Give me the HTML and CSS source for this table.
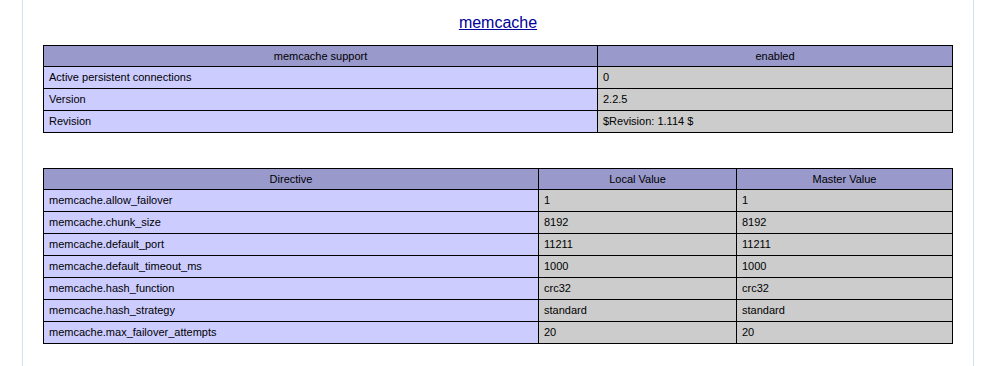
FILE: index.html
```html
<!DOCTYPE html>
<html>
<head>
<meta charset="utf-8">
<link rel="stylesheet" href="styles.css">
</head>
<body>
<div class="page">
  <h2 class="title"><a href="#module_memcache">memcache</a></h2>
  <table class="info t1">
    <colgroup><col class="c1"><col class="c2"></colgroup>
    <tr class="h"><th>memcache support</th><th>enabled</th></tr>
    <tr><td class="e">Active persistent connections </td><td class="v">0 </td></tr>
    <tr><td class="e">Version </td><td class="v">2.2.5 </td></tr>
    <tr><td class="e">Revision </td><td class="v">$Revision: 1.114 $ </td></tr>
  </table>
  <table class="info t2">
    <colgroup><col class="d1"><col class="d2"><col class="d3"></colgroup>
    <tr class="h"><th>Directive</th><th>Local Value</th><th>Master Value</th></tr>
    <tr><td class="e">memcache.allow_failover</td><td class="v">1</td><td class="v">1</td></tr>
    <tr><td class="e">memcache.chunk_size</td><td class="v">8192</td><td class="v">8192</td></tr>
    <tr><td class="e">memcache.default_port</td><td class="v">11211</td><td class="v">11211</td></tr>
    <tr><td class="e">memcache.default_timeout_ms</td><td class="v">1000</td><td class="v">1000</td></tr>
    <tr><td class="e">memcache.hash_function</td><td class="v">crc32</td><td class="v">crc32</td></tr>
    <tr><td class="e">memcache.hash_strategy</td><td class="v">standard</td><td class="v">standard</td></tr>
    <tr><td class="e">memcache.max_failover_attempts</td><td class="v">20</td><td class="v">20</td></tr>
  </table>
</div>
</body>
</html>
```
FILE: styles.css
```css
html, body {
  margin: 0;
  padding: 0;
  background: #ffffff;
  height: 100%;
}
body {
  font-family: "Liberation Sans", Arial, sans-serif;
  color: #000000;
}
.page {
  margin-left: 22px;
  width: 950px;
  min-height: 366px;
  border-left: 1px solid #d3e1ee;
  border-right: 1px solid #d3e1ee;
  box-sizing: content-box;
  padding-top: 14px;
}
.title {
  margin: 0 0 13px 0;
  text-align: center;
  font-size: 16px;
  font-weight: normal;
  line-height: 18px;
}
.title a {
  color: #000099;
  text-decoration: underline;
}
.info {
  border-collapse: collapse;
  table-layout: fixed;
  width: 909px;
  margin-left: 20px;
  font-size: 11px;
}
.t2 {
  margin-top: 35px;
}
.c1 { width: 554px; }
.c2 { width: 355px; }
.d1 { width: 495px; }
.d2 { width: 198px; }
.d3 { width: 216px; }
.info th, .info td {
  border: 1px solid #000000;
  line-height: 13px;
  padding: 4px 5px;
  vertical-align: baseline;
  white-space: nowrap;
}
.info th {
  background: #9999cc;
  font-weight: normal;
  text-align: center;
  padding: 4px 5px 3px;
}
.info td { text-align: left; }
.e { background: #ccccff; }
.v { background: #cccccc; }
```
